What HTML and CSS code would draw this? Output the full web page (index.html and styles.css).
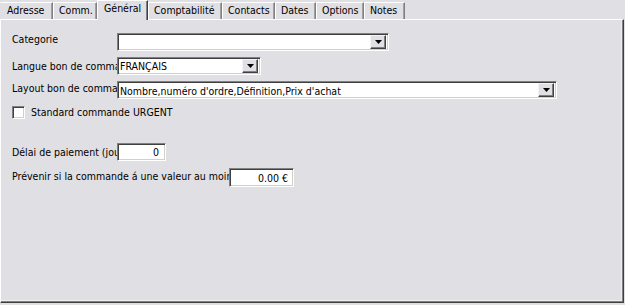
FILE: index.html
```html
<!DOCTYPE html>
<html>
  <head>
    <title>Fiche fournisseur - Général</title>
    <link rel="stylesheet" href="styles.css">
  </head>
  <body>
    <div class="window">
      <div class="tabs">
        <div class="tab tab-adresse">Adresse</div>
        <div class="tab tab-comm">Comm.</div>
        <div class="tab tab-general active">Général</div>
        <div class="tab tab-compta">Comptabilité</div>
        <div class="tab tab-contacts">Contacts</div>
        <div class="tab tab-dates">Dates</div>
        <div class="tab tab-options">Options</div>
        <div class="tab tab-notes">Notes</div>
      </div>

      <div class="panel">
        <div class="row row-first">
          <label class="label label-top">Categorie</label>
          <div class="combo combo-categorie">
            <span class="value"></span>
            <span class="arrow"><svg width="7" height="4" viewBox="0 0 7 4"><path d="M0 0h7L3.5 4z" fill="#000"/></svg></span>
          </div>
        </div>

        <div class="row">
          <label class="label">Langue bon de comma</label>
          <div class="combo combo-langue">
            <span class="value">FRANÇAIS</span>
            <span class="arrow"><svg width="7" height="4" viewBox="0 0 7 4"><path d="M0 0h7L3.5 4z" fill="#000"/></svg></span>
          </div>
        </div>

        <div class="row">
          <label class="label label-raised">Layout bon de comma</label>
          <div class="combo combo-layout">
            <span class="value value-low">Nombre,numéro d'ordre,Définition,Prix d'achat</span>
            <span class="arrow"><svg width="7" height="4" viewBox="0 0 7 4"><path d="M0 0h7L3.5 4z" fill="#000"/></svg></span>
          </div>
        </div>

        <div class="check-row">
          <span class="checkbox"></span>
          <span class="check-text">Standard commande URGENT</span>
        </div>

        <div class="row row-delai">
          <label class="label">Délai de paiement (jou</label>
          <div class="field field-delai">0</div>
        </div>

        <div class="row row-prevenir">
          <label class="label label-wide label-raised">Prévenir si la commande á une valeur au moir</label>
          <div class="field field-montant">0.00 €</div>
        </div>
      </div>
    </div>
  </body>
</html>
```

FILE: styles.css
```css
body {
  margin: 0;
  font-family: "DejaVu Sans Condensed", "DejaVu Sans", Verdana, sans-serif;
  font-size: 10.5px;
  color: #000;
  background: #e0dfe3;
}

.window {
  width: 625px;
  height: 305px;
  display: flex;
  flex-direction: column;
}

/* tab strip */
.tabs {
  display: flex;
  align-items: flex-end;
  height: 20px;
  position: relative;
  z-index: 1;
}

.tab {
  box-sizing: border-box;
  height: 17px;
  line-height: 15px;
  padding-left: 5px;
  border-top: 1px solid #fff;
  border-left: 1px solid #fff;
  border-right: 1px solid #808080;
  box-shadow: inset -1px 0 0 #a0a0a0;
  white-space: nowrap;
  overflow: hidden;
  margin-bottom: 1px;
}

.tab.active {
  height: 20px;
  line-height: 15px;
  padding-left: 6px;
  margin-bottom: 0;
  background: #e0dfe3;
  border-right: 1px solid #404040;
  box-shadow: inset -1px 0 0 #808080;
}

.tab-adresse { width: 53px; border-left-color: transparent; padding-left: 6px; }
.tab-comm { width: 44px; }
.tab-general { width: 51px; }
.tab-compta { width: 74px; }
.tab-contacts { width: 53px; }
.tab-dates { width: 41px; }
.tab-options { width: 48px; }
.tab-notes { width: 41px; }

/* page */
.panel {
  flex: 1;
  margin-top: -1px;
  margin-right: 1px;
  margin-bottom: 2px;
  border-top: 1px solid #fff;
  border-left: 1px solid #fff;
  border-right: 1px solid #404040;
  border-bottom: 1px solid #404040;
  box-shadow: inset -1px -1px 0 #808080, inset -5px -5px 0 -3px #eeeef0;
  padding-left: 11px;
}

.row {
  display: flex;
  align-items: center;
  height: 18px;
  margin-top: 6px;
}

.row-first {
  margin-top: 13px;
}

.label {
  width: 105px;
  overflow: hidden;
  white-space: nowrap;
  flex-shrink: 0;
}

.label-top {
  align-self: flex-start;
}

.label-raised {
  margin-bottom: 4px;
}

.label-wide {
  width: 217px;
}

.combo,
.field {
  box-sizing: border-box;
  height: 18px;
  background: #fff;
  border-top: 1px solid #808080;
  border-left: 1px solid #808080;
  border-right: 1px solid #fff;
  border-bottom: 1px solid #fff;
  box-shadow: inset 1px 1px 0 #404040, inset -1px -1px 0 #d4d0c8;
  display: flex;
  align-items: center;
  white-space: nowrap;
}

.combo .value {
  flex: 1;
  padding-left: 2px;
  overflow: hidden;
}

.combo .value-low {
  padding-top: 2px;
}

.combo .arrow {
  box-sizing: border-box;
  width: 16px;
  height: 14px;
  margin-right: 2px;
  background: #e0dfe3;
  border-top: 1px solid #f4f4f4;
  border-left: 1px solid #f4f4f4;
  border-right: 1px solid #404040;
  border-bottom: 1px solid #404040;
  box-shadow: inset -1px -1px 0 #808080;
  display: flex;
  align-items: center;
  justify-content: center;
}

.combo-categorie { width: 272px; }
.combo-langue { width: 144px; }
.combo-layout { width: 440px; }

.check-row {
  display: flex;
  align-items: center;
  height: 14px;
  margin-top: 6px;
}

.checkbox {
  box-sizing: border-box;
  width: 13px;
  height: 13px;
  background: #fff;
  border-top: 1px solid #808080;
  border-left: 1px solid #808080;
  border-right: 1px solid #fff;
  border-bottom: 1px solid #fff;
  box-shadow: inset 1px 1px 0 #404040, inset -1px -1px 0 #d4d0c8;
  margin-right: 6px;
}

.row-delai {
  margin-top: 24px;
}

.row-prevenir {
  height: 19px;
  margin-top: 7px;
}

.field {
  justify-content: flex-end;
  padding-right: 6px;
}

.field-delai { width: 49px; }
.field-montant { width: 65px; height: 19px; padding-right: 5px; }
```
